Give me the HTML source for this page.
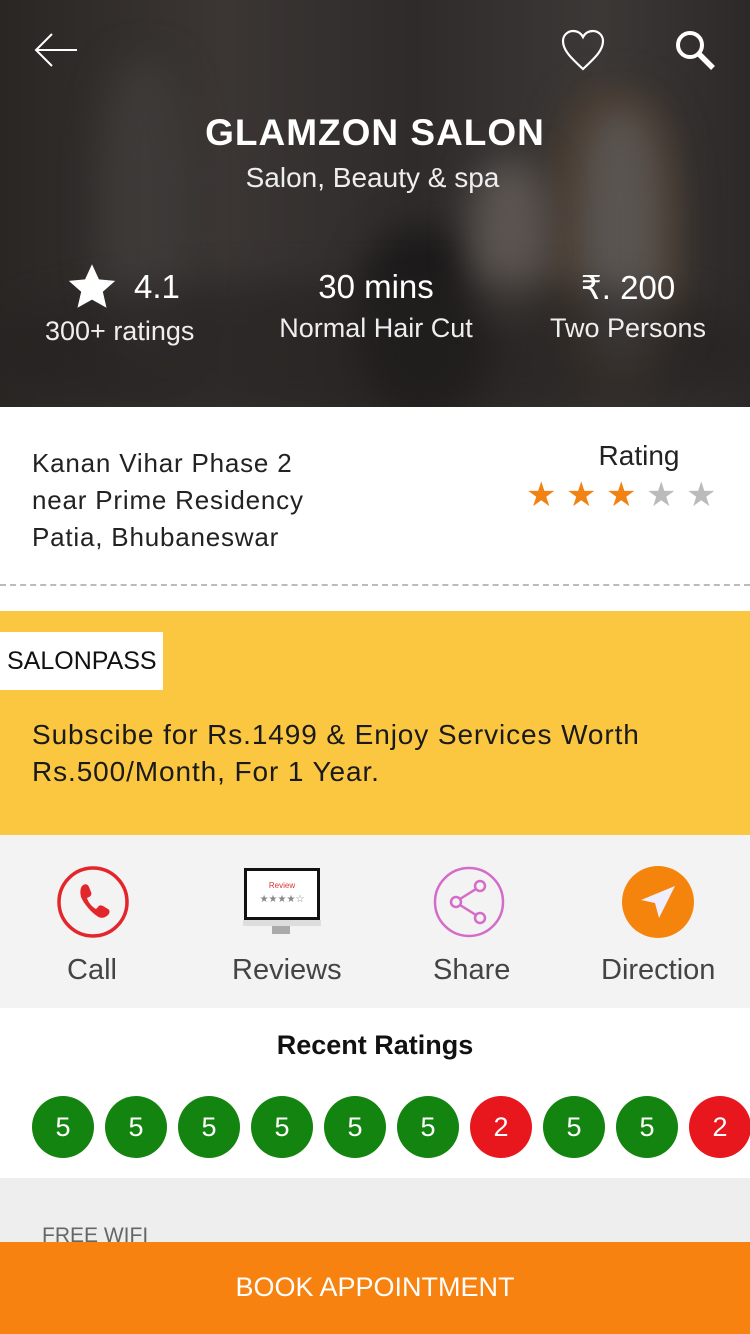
<!DOCTYPE html>
<html><head><meta charset="utf-8"><style>
*{margin:0;padding:0;box-sizing:border-box}
body{width:750px;height:1334px;overflow:hidden;font-family:"Liberation Sans",sans-serif;background:#fff;position:relative}
.hdr{position:absolute;left:0;top:0;width:750px;height:407px;background:linear-gradient(90deg,#2a2624 0%,#3b3634 30%,#2e2b2a 55%,#3c3836 80%,#2c2928 100%);overflow:hidden}
.blob{position:absolute;border-radius:40%;filter:blur(18px)}
.abs{position:absolute}
.w{color:#fff}
.st{position:absolute;top:0;font-size:34px;line-height:34px}
</style></head><body>
<div class="hdr">
 <div class="blob" style="left:550px;top:90px;width:130px;height:300px;background:#4a3c30"></div>
 <div class="blob" style="left:580px;top:110px;width:80px;height:260px;background:#5a5552"></div>
 <div class="blob" style="left:360px;top:230px;width:130px;height:180px;background:#1b1a1a"></div>
 <div class="blob" style="left:470px;top:160px;width:80px;height:160px;background:#5b5450"></div>
 <div class="blob" style="left:100px;top:60px;width:90px;height:300px;background:#3d3a38"></div>
 <div class="blob" style="left:0px;top:280px;width:750px;height:140px;background:#242120;opacity:.6"></div>
 <svg class="abs" style="left:33px;top:32px" width="46" height="36" viewBox="0 0 46 36"><path d="M44 18H3M19 2L3 18l16 16" stroke="#fff" stroke-width="2" fill="none"/></svg>
 <svg class="abs" style="left:560px;top:28px" width="46" height="44" viewBox="0 0 46 44"><path d="M23 41C10 29 3 22 3 13 3 7 8 3 13 3c4 0 8 2 10 6 2-4 6-6 10-6 5 0 10 4 10 10 0 9-7 16-20 28z" stroke="#fff" stroke-width="2.2" fill="none"/></svg>
 <svg class="abs" style="left:673px;top:28px" width="46" height="44" viewBox="0 0 46 44"><circle cx="17" cy="17" r="12" stroke="#fff" stroke-width="4" fill="none"/><path d="M26 26l14 14" stroke="#fff" stroke-width="5.5"/></svg>
 <div class="abs w" style="left:0;width:750px;top:112px;text-align:center;font-size:37px;font-weight:bold;letter-spacing:1px">GLAMZON SALON</div>
 <div class="abs w" style="left:0;width:745px;top:162px;text-align:center;font-size:28px;color:#eee">Salon, Beauty &amp; spa</div>
 <svg class="abs" style="left:66px;top:262px" width="52" height="50" viewBox="0 0 24 23"><path d="M12 1l3.2 7 7.5.7-5.7 5 1.7 7.4L12 17.3 5.3 21.1 7 13.7 1.3 8.7 8.8 8z" fill="#fff"/></svg>
 <div class="abs w" style="left:134px;top:268px;font-size:33px">4.1</div>
 <div class="abs w" style="left:45px;top:316px;font-size:27px;color:#eee">300+ ratings</div>
 <div class="abs w" style="left:270px;width:212px;top:268px;font-size:33px;text-align:center">30 mins</div>
 <div class="abs w" style="left:270px;width:212px;top:313px;font-size:27px;text-align:center;color:#eee">Normal Hair Cut</div>
 <div class="abs w" style="left:543px;width:170px;top:268px;font-size:33px;text-align:center">₹. 200</div>
 <div class="abs w" style="left:543px;width:170px;top:313px;font-size:27px;text-align:center;color:#eee">Two Persons</div>
</div>
<div class="abs" style="left:32px;top:445px;font-size:26px;letter-spacing:0.8px;line-height:37px;color:#222">Kanan Vihar Phase 2<br>near Prime Residency<br>Patia, Bhubaneswar</div>
<div class="abs" style="left:560px;width:158px;top:440px;text-align:center;font-size:28px;color:#222">Rating</div>
<div class="abs" style="left:0;top:478px;width:750px;height:36px">
 <span class="st" style="left:526px;color:#f08314">★</span><span class="st" style="left:566px;color:#f08314">★</span><span class="st" style="left:606px;color:#f08314">★</span><span class="st" style="left:646px;color:#bbb">★</span><span class="st" style="left:686px;color:#bbb">★</span>
</div>
<div class="abs" style="left:0;top:584px;width:750px;border-top:2px dashed #bbb"></div>
<div class="abs" style="left:0;top:611px;width:750px;height:224px;background:#fbc640"></div>
<div class="abs" style="left:0;top:632px;width:163px;height:58px;background:#fff;font-size:25px;line-height:58px;padding-left:7px;color:#111">SALONPASS</div>
<div class="abs" style="left:32px;top:716px;font-size:28px;letter-spacing:0.9px;line-height:37px;color:#1a1a1a">Subscibe for Rs.1499 &amp; Enjoy Services Worth<br>Rs.500/Month, For 1 Year.</div>
<div class="abs" style="left:0;top:835px;width:750px;height:173px;background:#f3f3f3"></div>
<svg class="abs" style="left:56px;top:866px" width="76" height="72" viewBox="0 0 76 72"><circle cx="37" cy="36" r="34" stroke="#e3262c" stroke-width="3.5" fill="none"/><path d="M26 20c3-3 6-2 7 1l2 5c1 2 0 4-2 5l-2 1c1 4 5 9 9 11l2-2c1-2 3-2 5-1l5 3c2 1 2 4 0 6-3 3-7 4-11 1-6-4-13-12-16-19-1-4-1-8 1-11z" fill="#e3262c"/></svg>
<div class="abs" style="left:244px;top:868px;width:76px;height:52px;border:3px solid #111;background:#fff;text-align:center;font-size:8px;color:#d33;line-height:14px;padding-top:8px">Review<br><span style="color:#888;font-size:10px">★★★★☆</span></div>
<div class="abs" style="left:243px;top:920px;width:78px;height:6px;background:#ddd"></div>
<div class="abs" style="left:272px;top:926px;width:18px;height:8px;background:#aaa"></div>
<svg class="abs" style="left:432px;top:866px" width="76" height="72" viewBox="0 0 76 72"><circle cx="37" cy="36" r="34" stroke="#d46cc8" stroke-width="2.5" fill="none"/><circle cx="48" cy="20" r="5" stroke="#d46cc8" stroke-width="2.5" fill="none"/><circle cx="24" cy="36" r="5" stroke="#d46cc8" stroke-width="2.5" fill="none"/><circle cx="48" cy="52" r="5" stroke="#d46cc8" stroke-width="2.5" fill="none"/><path d="M44 23L28 33M28 39l16 10" stroke="#d46cc8" stroke-width="2.5"/></svg>
<svg class="abs" style="left:620px;top:866px" width="76" height="74" viewBox="0 0 76 74"><circle cx="38" cy="36" r="36" fill="#f5840c"/><path d="M55 20L21 34l14 3 4 15z" fill="#eef"/></svg>
<div class="abs" style="left:0;top:954px;width:750px;font-size:29px;color:#444">
 <span class="abs" style="left:67px">Call</span><span class="abs" style="left:232px">Reviews</span><span class="abs" style="left:433px">Share</span><span class="abs" style="left:601px">Direction</span></div>
<div class="abs" style="left:0;width:750px;top:1030px;text-align:center;font-size:27px;font-weight:bold;color:#111">Recent Ratings</div>
<div class="abs" style="left:0;top:1096px;width:760px;height:62px">
<script>
var c=['5','5','5','5','5','5','2','5','5','2'];
for(var i=0;i<10;i++){document.write('<div style="position:absolute;left:'+(32+i*73)+'px;top:0;width:62px;height:62px;border-radius:50%;background:'+(c[i]=='2'?'#e8171e':'#12840f')+';color:#fff;font-size:27px;line-height:62px;text-align:center">'+c[i]+'</div>')}
</script></div>
<div class="abs" style="left:0;top:1178px;width:750px;height:70px;background:#eee"></div>
<div class="abs" style="left:42px;top:1224px;font-size:21px;color:#666">FREE WIFI</div>
<div class="abs" style="left:0;top:1242px;width:750px;height:92px;background:#f7820f;color:#fff;font-size:27px;text-align:center;line-height:90px">BOOK APPOINTMENT</div>
</body></html>
